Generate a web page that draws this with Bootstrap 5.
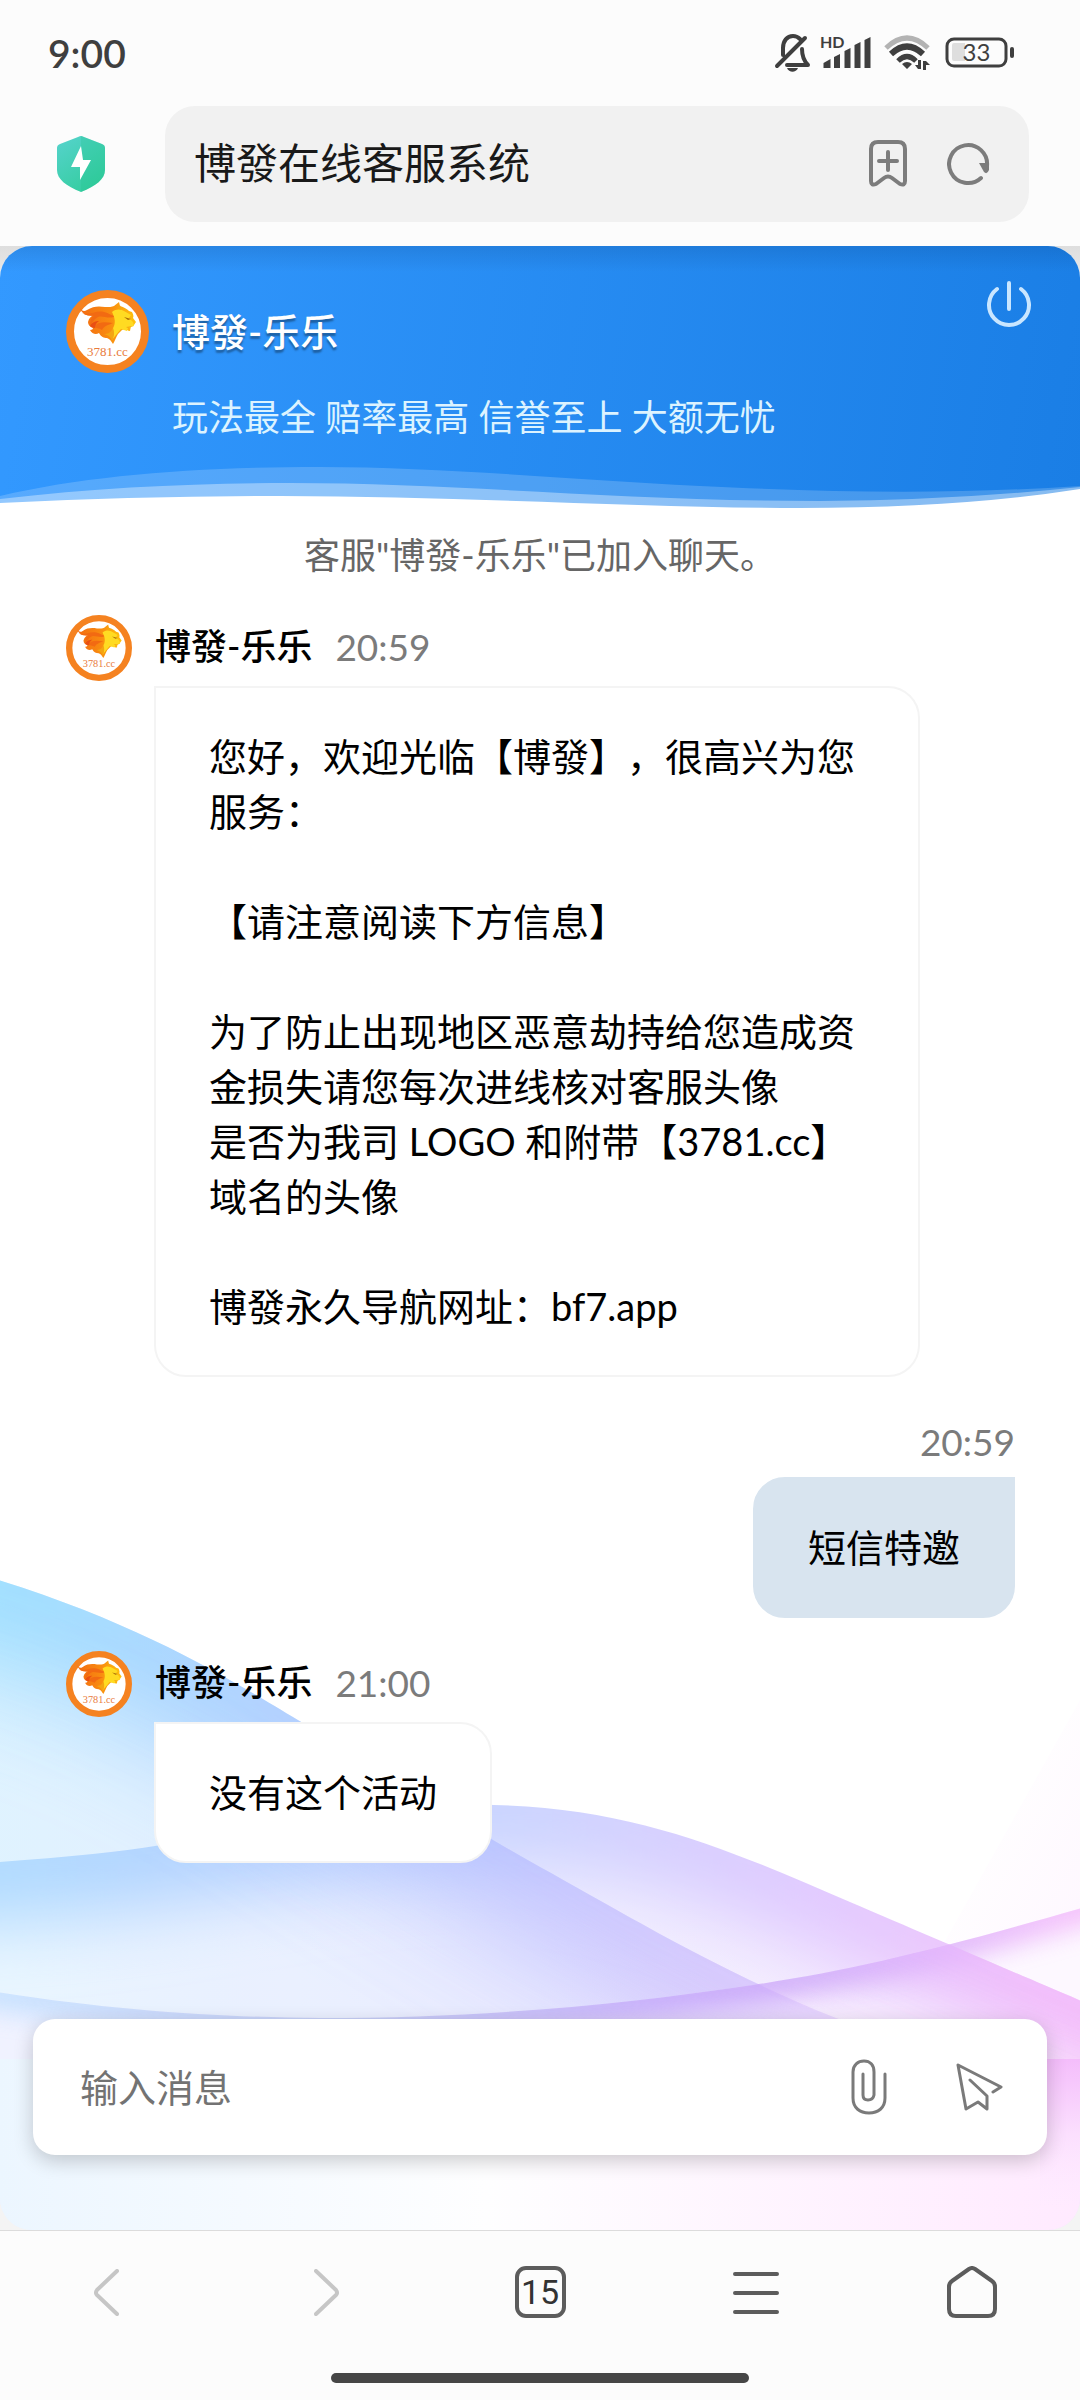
<!DOCTYPE html>
<html lang="zh-CN">
<head>
<meta charset="utf-8">
<meta name="viewport" content="width=device-width, initial-scale=1">
<title>博發在线客服系统</title>
<link href="https://cdn.jsdelivr.net/npm/bootstrap@5.3.0/dist/css/bootstrap.min.css" rel="stylesheet">
<style>
  body { background: #fcfcfc; color: #000; font-family: Lato, "Noto Sans CJK SC", sans-serif; font-size: 38px; line-height: 55px; text-spacing-trim: space-all; }
  svg { display: block; flex: none; }
  button.btn { --bs-btn-padding-x: 0; --bs-btn-padding-y: 0; --bs-btn-border-width: 0; line-height: 1; }
  .status-bar { height: 106px; padding: 0 66px 0 48px; color: #3f3f3f; }
  .clock { font-size: 39px; font-weight: 600; }
  .address-row { padding: 0 51px 24px 54px; gap: 58px; }
  .address-box { height: 116px; border-radius: 30px; background: #f1f1f1; padding: 0 38px 2px 29px; }
  .address-box input { font-size: 42px; color: #191919; }
  .address-box input:focus, .composer input:focus { box-shadow: none; background: transparent; }
  .page-back { background: linear-gradient(#dedede, #f4f4f4 60px, #f4f4f4); }
  .chat-panel { background: #fff; border-radius: 32px; overflow: hidden; }
  .backdrop-art { height: 720px; }
  .agent-head { min-height: 264px; padding: 44px 46px 0 66px; color: #fff;
    background: linear-gradient(rgba(0,40,90,.14), rgba(0,40,90,0) 26px), linear-gradient(100deg, #3399ff, #1a7ee5); }
  .agent-head h1 { font-size: 38px; line-height: 55px; font-weight: 500; text-shadow: 0 3px 2px rgba(0,0,0,.35); }
  .agent-head .btn { margin-top: -12px; }
  .agent-gap { gap: 23px; }
  .slogan { font-size: 36px; color: #dcf3ff; padding: 17px 0 0 106px; }
  .head-wave { height: 46px; }
  .notice { font-size: 36px; color: #666; padding-top: 18px; }
  .thread { padding: 0 65px 0 66px; gap: 33px; margin-top: 32px; }
  .meta-line { min-height: 66px; gap: 23px; font-size: 36px; }
  .meta-line strong, .meta-line time { padding-bottom: 4px; }
  .meta-line strong { font-weight: 500; }
  .meta-line time { color: #7b7b7b; font-size: 37px; }
  .meta-out { min-height: 66px; }
  .bubble { padding: 41px 53px; margin-top: 5px; border: 2px solid #f4f4f4; background: #fff; border-radius: 0 32px 32px 32px; }
  .bubble-in { margin-left: 88px; max-width: 766px; }
  .bubble-out { margin-top: 1px; border-color: #d8e4ef; background: #d8e4ef; border-radius: 32px 0 32px 32px; }
  .composer { min-height: 136px; margin: 0 33px 75px; padding: 0 44px 0 47px; gap: 68px; border-radius: 22px; background: #fff; box-shadow: 0 6px 20px rgba(0,0,0,.2); }
  .composer input { font-size: 38px; }
  .composer input::placeholder { color: #737373; opacity: 1; }
  .browser-nav { height: 170px; border-top: 1px solid #dcdcdc; background: #fcfcfc; padding-top: 35px; }
  .tab-count { width: 51px; height: 52px; border: 4px solid #5c5c5c; border-radius: 11px; font-size: 34px; line-height: 42px; color: #333; font-family: Roboto, sans-serif; }
  .home-bar { width: 418px; height: 10px; background: #464646; border-radius: 5px; margin-bottom: 17px; }
</style>
<script src="https://cdn.jsdelivr.net/npm/bootstrap@5.3.0/dist/js/bootstrap.bundle.min.js"></script>
</head>
<body class="d-flex flex-column min-vh-100">

<svg width="0" height="0" class="position-absolute" aria-hidden="true">
  <defs>
    <linearGradient id="mane" x1="0" y1="0" x2="1" y2="0"><stop offset="0" stop-color="#f36c12"/><stop offset=".55" stop-color="#f98c10"/><stop offset="1" stop-color="#ffc40c"/></linearGradient>
    <symbol id="lion" viewBox="0 0 83 83">
      <circle cx="41.500" cy="41.500" r="37.500" fill="#fff" stroke="#f58220" stroke-width="8"/>
      <path fill="url(#mane)" d="M14 18c2 3 4 4 7 2 6-4 12-4 18-3 4 0 7 0 9-1l5-4 1 4c4 1 7 3 9 5l3 1c1 2 2 4 1 6l3 4-2 3-3 1-1 5c-3 0-4-3-8-1l-4 4c-2 3-3 7-5 10-2-3-3-5-6-6-3 0-6-1-8-5-3 2-7 1-9-3 2 0 3-1 3-2-3-1-5-3-5-6 1-4 3-6 6-7-7 2-12-1-14-7z"/>
      <path fill="#f26a12" d="M16 23c7 3 14-3 22-1 5 1 8 4 12 4-7 4-13-1-18 1-4 2-5 5-8 8 1-4 0-7 4-9-5 0-9-1-12-3zM27 37c6-6 12-5 20-4-5 2-9 3-11 7-3-2-6-2-9-3z"/>
      <path fill="#e94f13" d="M24 36c2-4 6-5 9-5-3 2-4 4-4 7-2 0-4-1-5-2z"/>
      <path fill="#ffdb22" d="M46 22c4-3 8-3 12-1l7 4-2 3 4 4 1 4-6 2-1 3-6-2-5 6-4 5c3-8-1-9 2-14 2-5 0-10-2-14z"/>
      <path fill="#a86a08" d="M58 27l7 2-3 1z"/>
      <path fill="#f4a512" d="M52 18l2-3 1 5zM60 37l7-1-5 2zM47 38c-2 5-6 6-9 6 4 1 7 3 8 7 2-4 3-8 1-13z"/>
      <text x="41.500" y="66" text-anchor="middle" font-family="Liberation Serif, serif" font-size="13" fill="#e97b3c">3781.cc</text>
    </symbol>
  </defs>
</svg>

<div class="status-bar d-flex align-items-center justify-content-between">
  <span class="clock">9:00</span>
  <svg width="240" height="58" viewBox="774 26 240 58" aria-label="33">
    <g fill="none" stroke="#3f3f3f" stroke-width="4" stroke-linecap="round" stroke-linejoin="round">
      <path d="M783 57V50c0-7 4-12 10-12 3 0 5 1 7 3M777 68l28-28M787 67h21c-4-4-6-8-6-16"/>
    </g>
    <path fill="#3f3f3f" d="M787 70h11c-2 5-9 5-11 0z"/>
    <text x="820" y="50" font-family="Lato, sans-serif" font-weight="700" font-size="16" fill="#3f3f3f">HD</text>
    <path fill="#3f3f3f" d="M823.500 65l7-4v9h-7zM834 59l6-3v14h-6zM844.500 53l6-3v20h-6zM854.500 47l6-3v26h-6zM864.500 42l6-3v31h-6z"/>
    <g fill="none" stroke="#3f3f3f" stroke-linecap="butt">
      <path stroke="#b3b3b3" stroke-width="5" d="M886 50q21-20 42 0"/>
      <path stroke-width="6" d="M891 56q16-15 32 0"/>
      <path stroke-width="5" d="M898 63q9-9 18 0"/>
    </g>
    <path fill="#3f3f3f" d="M902 66q5-4 10 0l-5 5zM921 62v9h-3l-3-4h3v-5zM923 63h3l4 4h-4v5h-3z"/>
    <rect x="947" y="41" width="59" height="27" rx="7" fill="none" stroke="#3f3f3f" stroke-width="3"/>
    <path d="M954 45h11v18h-11a2 2 0 0 1-2-2V47a2 2 0 0 1 2-2z" fill="#dedede"/>
    <rect x="1010" y="49" width="4" height="11" rx="2" fill="#3f3f3f"/>
    <text x="976.500" y="63" text-anchor="middle" font-family="Lato, sans-serif" font-size="24" fill="#3f3f3f">33</text>
  </svg>
</div>

<div class="address-row d-flex align-items-center">
  <svg width="53" height="58" viewBox="0 0 53 58" aria-label="安全">
    <defs><linearGradient id="shield" x1="0" y1="0" x2=".6" y2="1"><stop stop-color="#56d3cd"/><stop offset="1" stop-color="#35cda0"/></linearGradient></defs>
    <path fill="url(#shield)" d="M27 1q1 0 3 1l18 7q3 1 3 4v22c0 9-9 16-24 22C12 51 3 44 3 35V13q0-3 3-4l18-7q2-1 3-1z"/>
    <path fill="#1fc58c" opacity=".25" d="M27 1q1 0 3 1l18 7q3 1 3 4v22c0 9-9 16-24 22z"/>
    <path fill="#fff" d="M27 11L17 32h9v13l11-20h-8z"/>
  </svg>
  <div class="address-box d-flex align-items-center flex-grow-1">
    <input class="form-control border-0 bg-transparent p-0" type="text" aria-label="地址栏" value="博發在线客服系统">
    <div class="d-flex align-items-center gap-4">
      <button class="btn me-2" type="button" aria-label="添加书签">
        <svg width="56" height="48" viewBox="0 0 56 48" fill="none" stroke="#7c7c7c" stroke-width="4" stroke-linecap="round" stroke-linejoin="round"><path d="M19 3h20q7 0 7 7v32q0 5-5 3l-8-6q-4-3-8 0l-8 6q-5 2-5-3V10q0-7 7-7zM29 13v18M20 22h18"/></svg>
      </button>
      <button class="btn" type="button" aria-label="刷新">
        <svg width="44" height="46" viewBox="0 0 44 46" fill="none" stroke="#7c7c7c" stroke-width="4" stroke-linecap="round"><path d="M34 38A19 19 0 1 1 40 26"/><path fill="#7c7c7c" stroke="none" d="M32 23h10v7q-2 5-5 2z"/></svg>
      </button>
    </div>
  </div>
</div>

<div class="page-back d-flex flex-column flex-grow-1">
<main class="chat-panel d-flex flex-column flex-grow-1 position-relative">

  <svg class="backdrop-art position-absolute bottom-0 start-0 w-100" viewBox="0 1510 1080 720" preserveAspectRatio="none" aria-hidden="true">
    <defs>
      <path id="curveA" d="M-140 1545C110 1595 240 1687 303 1723S460 1823 540 1867S720 1972 836 2018S1000 2070 1120 2090"/>
      <path id="curveB" d="M-140 1870Q70 1860 155 1846C280 1826 400 1800 494 1805C640 1808 740 1855 850 1902S1020 1975 1220 2060"/>
      <path id="curveC" d="M-140 1966C50 2008 200 2017 320 2018C480 2018 620 2005 753 1985S980 1938 1220 1868"/>
      <clipPath id="clipA"><path d="M-140 1545C110 1595 240 1687 303 1723S460 1823 540 1867S720 1972 836 2018S1000 2070 1120 2090V2240H-140z"/></clipPath>
      <clipPath id="clipB"><path d="M-140 1870Q70 1860 155 1846C280 1826 400 1800 494 1805C640 1808 740 1855 850 1902S1020 1975 1220 2060V2240H-140z"/></clipPath>
      <clipPath id="clipC"><path d="M-140 1966C50 2008 200 2017 320 2018C480 2018 620 2005 753 1985S980 1938 1220 1868V2240H-140z"/></clipPath>
      <filter id="haze" filterUnits="userSpaceOnUse" x="-300" y="1300" width="1700" height="1100"><feGaussianBlur stdDeviation="55"/></filter>
      <filter id="soft" filterUnits="userSpaceOnUse" x="-300" y="1300" width="1700" height="1100"><feGaussianBlur stdDeviation="34"/></filter>
      <filter id="softer" filterUnits="userSpaceOnUse" x="-300" y="1300" width="1700" height="1100"><feGaussianBlur stdDeviation="12"/></filter>
      <linearGradient id="inkA" gradientUnits="userSpaceOnUse" x1="0" y1="0" x2="850" y2="0"><stop stop-color="#93dcff"/><stop offset=".35" stop-color="#a9c9ff"/><stop offset=".65" stop-color="#b6b8ff"/><stop offset="1" stop-color="#d2b2f9"/></linearGradient>
      <linearGradient id="inkB" gradientUnits="userSpaceOnUse" x1="0" y1="0" x2="1080" y2="0"><stop stop-color="#a4d4ff"/><stop offset=".25" stop-color="#a9c9ff"/><stop offset=".5" stop-color="#c0c9ff"/><stop offset=".75" stop-color="#d9bdff"/><stop offset="1" stop-color="#f3b4fa"/></linearGradient>
      <linearGradient id="inkC" gradientUnits="userSpaceOnUse" x1="0" y1="0" x2="1080" y2="0"><stop stop-color="#b9dcff"/><stop offset=".35" stop-color="#adb8f2"/><stop offset=".6" stop-color="#b898f8"/><stop offset=".85" stop-color="#cf9df8"/><stop offset="1" stop-color="#f3aefa"/></linearGradient>
      <linearGradient id="baseA" x1="0" y1="0" x2="1" y2="0"><stop stop-color="#dff3ff"/><stop offset=".5" stop-color="#e6ecff"/><stop offset="1" stop-color="#f8edff"/></linearGradient>
      <linearGradient id="baseB" x1="0" y1="0" x2="1" y2="0"><stop stop-color="#ebf7ff"/><stop offset=".5" stop-color="#ecebff"/><stop offset="1" stop-color="#fae6fe"/></linearGradient>
      <linearGradient id="floorX" gradientUnits="userSpaceOnUse" x1="0" y1="0" x2="1080" y2="0"><stop stop-color="#ecf6ff"/><stop offset=".45" stop-color="#fefeff"/><stop offset="1" stop-color="#ffeaff"/></linearGradient>
      <linearGradient id="pinkDown" x1="0" y1="0" x2="0" y2="1"><stop stop-color="#f4bdfb"/><stop offset=".5" stop-color="#fbdffe"/><stop offset="1" stop-color="#fdeaff" stop-opacity="0"/></linearGradient>
      <linearGradient id="blush" x1="0" y1="0" x2="1" y2="1"><stop offset=".3" stop-color="#fff"/><stop offset="1" stop-color="#fef7ff"/></linearGradient>
    </defs>
    <path d="M1080 1700L940 1950L1080 1912z" fill="url(#blush)"/>
    <g clip-path="url(#clipA)">
      <rect x="-40" y="1500" width="1160" height="740" fill="url(#baseA)"/>
      <use href="#curveA" fill="none" stroke="url(#inkA)" stroke-width="170" filter="url(#haze)" opacity=".9"/>
    </g>
    <g clip-path="url(#clipB)" opacity=".8">
      <rect x="-40" y="1500" width="1160" height="740" fill="url(#baseB)"/>
      <use href="#curveB" fill="none" stroke="url(#inkB)" stroke-width="120" filter="url(#soft)"/>
    </g>
    <g clip-path="url(#clipB)"><g clip-path="url(#clipA)">
      <use href="#curveA" fill="none" stroke="url(#inkA)" stroke-width="150" filter="url(#haze)" opacity=".6"/>
    </g></g>
    <g clip-path="url(#clipC)">
      <rect x="-40" y="1500" width="1160" height="740" fill="#fbeeff" opacity=".4"/>
      <use href="#curveC" fill="none" stroke="url(#inkC)" stroke-width="36" filter="url(#softer)" opacity=".7"/>
      <g clip-path="url(#clipB)"><use href="#curveB" fill="none" stroke="url(#inkB)" stroke-width="80" filter="url(#soft)" opacity=".9"/></g>
    </g>
    <rect y="2059" width="1080" height="171" fill="url(#floorX)"/>
    <rect x="1040" y="2059" width="40" height="150" fill="url(#pinkDown)"/>
  </svg>

  <header class="agent-head position-relative">
    <div class="d-flex align-items-center agent-gap">
      <svg width="83" height="83"><use href="#lion"/></svg>
      <h1 class="m-0">博發-乐乐</h1>
      <button class="btn ms-auto align-self-start" type="button" aria-label="结束会话">
        <svg width="50" height="50" viewBox="0 0 50 50" fill="none" stroke="#c9e6ff" stroke-width="4" stroke-linecap="round"><path d="M13 11A20 20 0 1 0 37 11M25 5V31"/></svg>
      </button>
    </div>
    <p class="slogan m-0">玩法最全 赔率最高 信誉至上 大额无忧</p>
    <svg class="head-wave position-absolute bottom-0 start-0 w-100" viewBox="0 464 1080 46" preserveAspectRatio="none" aria-hidden="true">
      <path fill="#fff" opacity=".18" d="M0 496C90 475 200 467 320 467S560 479 700 486S960 494 1080 486V511H0z"/>
      <path fill="#fff" opacity=".36" d="M0 499C100 487 200 483 290 483C460 483 620 501 820 501Q960 500 1080 487V511H0z"/>
      <path fill="#fff" d="M0 503Q140 496 280 496C460 496 640 508 800 508Q960 508 1080 489V511H0z"/>
    </svg>
  </header>

  <p class="notice position-relative text-center m-0">客服"博發-乐乐"已加入聊天。</p>

  <section class="thread position-relative d-flex flex-column" aria-label="聊天记录">
    <article class="d-flex flex-column align-items-start">
      <div class="meta-line d-flex align-items-center">
        <svg width="66" height="66"><use href="#lion"/></svg>
        <strong>博發-乐乐</strong>
        <time>20:59</time>
      </div>
      <div class="bubble bubble-in">您好，欢迎光临【博發】，很高兴为您服务：<br><br>【请注意阅读下方信息】<br><br>为了防止出现地区恶意劫持给您造成资金损失请您每次进线核对客服头像<br>是否为我司 LOGO 和附带【3781.cc】域名的头像<br><br>博發永久导航网址：bf7.app</div>
    </article>
    <article class="d-flex flex-column align-items-end">
      <div class="meta-line meta-out d-flex align-items-center"><time>20:59</time></div>
      <div class="bubble bubble-out">短信特邀</div>
    </article>
    <article class="d-flex flex-column align-items-start">
      <div class="meta-line d-flex align-items-center">
        <svg width="66" height="66"><use href="#lion"/></svg>
        <strong>博發-乐乐</strong>
        <time>21:00</time>
      </div>
      <div class="bubble bubble-in">没有这个活动</div>
    </article>
  </section>

  <form class="composer position-relative d-flex align-items-center mt-auto">
    <input class="form-control border-0 bg-transparent p-0" type="text" placeholder="输入消息" aria-label="输入消息">
    <button class="btn" type="button" aria-label="附件">
      <svg width="36" height="57" viewBox="0 0 36 57" fill="none" stroke="#7a7a7a" stroke-width="3" stroke-linecap="round"><path d="M12 15V36q0 5 5 5t6-5V13C23 6 19 2 13 2S2 6 2 13V39c0 10 7 15 16 15s16-5 16-15V15"/></svg>
    </button>
    <button class="btn" type="submit" aria-label="发送">
      <svg width="48" height="50" viewBox="0 0 48 50" fill="none" stroke="#7a7a7a" stroke-width="3" stroke-linecap="round" stroke-linejoin="round"><path d="M15 18L32 34V47L23 40L11 47L3 3L46 25L38 30"/></svg>
    </button>
  </form>
</main>
</div>

<nav class="browser-nav d-flex flex-column justify-content-between align-items-center" aria-label="浏览器工具栏">
  <div class="row g-0 w-100">
    <div class="col d-flex justify-content-center"><button class="btn" type="button" aria-label="后退" disabled>
      <svg width="30" height="52" viewBox="0 0 30 52" fill="none" stroke="#aaa" stroke-width="4" stroke-linecap="round" stroke-linejoin="round"><path d="M24 5L4 24q-2 3 0 5L24 48"/></svg></button></div>
    <div class="col d-flex justify-content-center"><button class="btn" type="button" aria-label="前进" disabled>
      <svg width="30" height="52" viewBox="0 0 30 52" fill="none" stroke="#aaa" stroke-width="4" stroke-linecap="round" stroke-linejoin="round"><path d="M7 5L27 24q2 3 0 5L7 48"/></svg></button></div>
    <div class="col d-flex justify-content-center"><button class="btn tab-count" type="button" aria-label="标签页">15</button></div>
    <div class="col d-flex justify-content-center"><button class="btn" type="button" aria-label="菜单">
      <svg width="46" height="52" viewBox="0 0 46 52" stroke="#5c5c5c" stroke-width="4" stroke-linecap="round"><path d="M2 8h42M2 27h42M2 46h42"/></svg></button></div>
    <div class="col d-flex justify-content-center"><button class="btn" type="button" aria-label="主页">
      <svg width="50" height="52" viewBox="0 0 50 52" fill="none" stroke="#5c5c5c" stroke-width="4" stroke-linejoin="round"><path d="M22 3q3-2 6 0l17 12q3 2 3 6V43q0 7-7 7H9q-7 0-7-7V21q0-4 3-6z"/></svg></button></div>
  </div>
  <div class="home-bar"></div>
</nav>
</body>
</html>
